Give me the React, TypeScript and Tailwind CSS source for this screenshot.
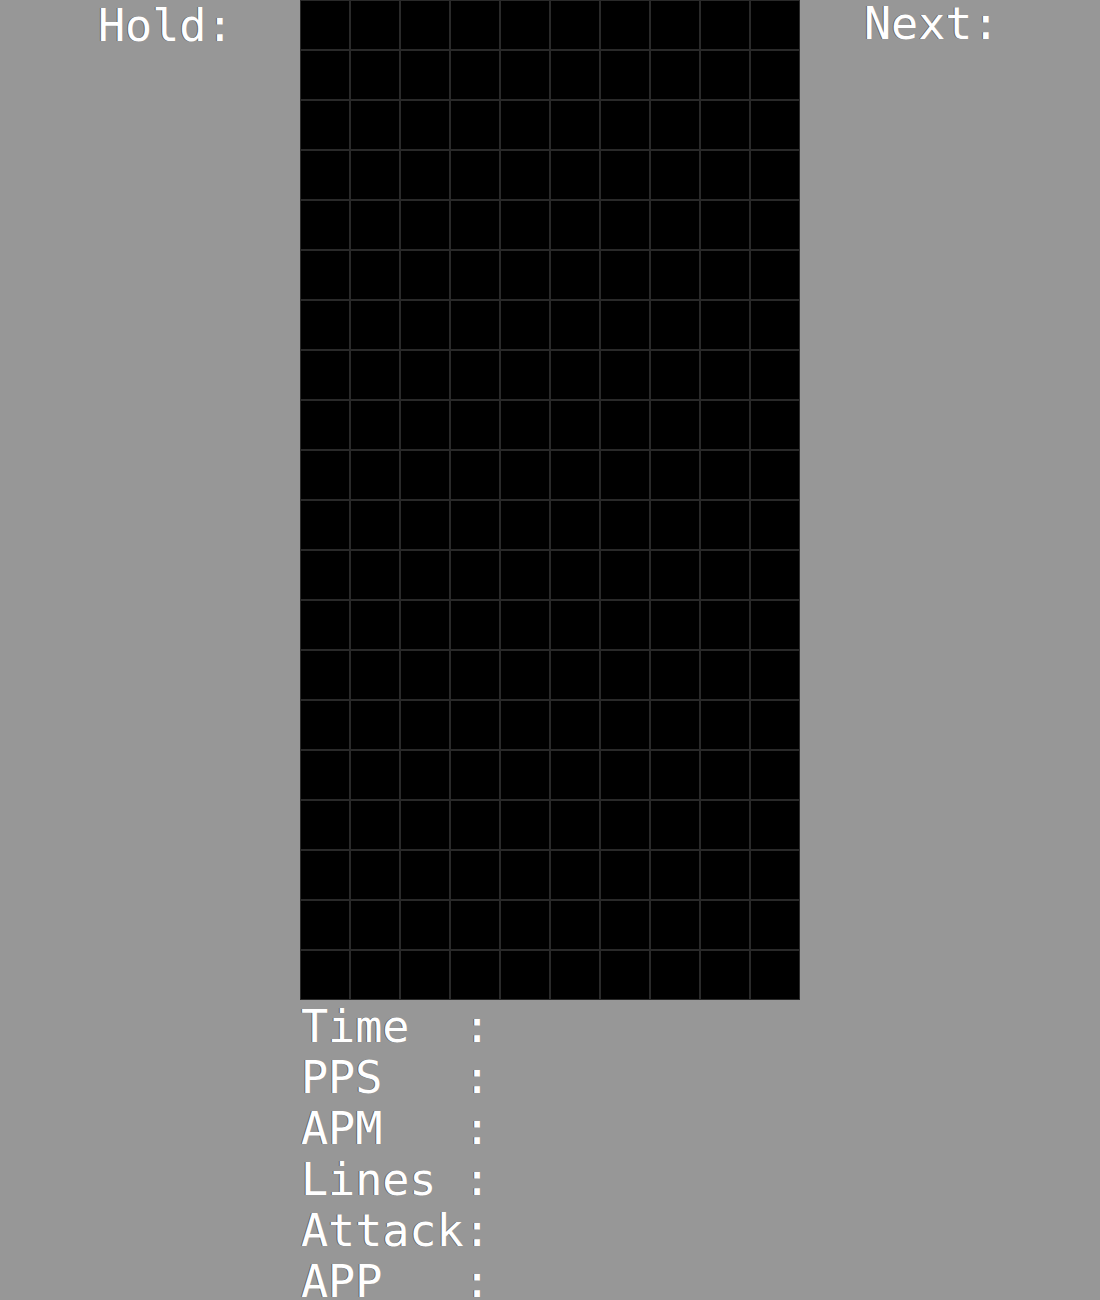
const ROWS = 20;
const COLUMNS = 10;
const STATS = ["Time", "PPS", "APM", "Lines", "Attack", "APP"];

function Board() {
  return (
    <div role="grid" aria-label="Playfield" className="grid grid-cols-10 bg-black">
      {Array.from({ length: ROWS * COLUMNS }, (_, i) => (
        <div key={i} className="aspect-square border border-[#292929]" />
      ))}
    </div>
  );
}

function Stats() {
  return (
    <dl className="pt-px pl-px">
      {STATS.map((label) => (
        <div key={label} className="flex">
          <dt className="whitespace-pre">{label.padEnd(6, " ") + ":"}</dt>
          <dd />
        </div>
      ))}
    </dl>
  );
}

export default function App() {
  return (
    <main className="grid h-screen grid-cols-[1fr_500px_1fr] overflow-hidden bg-[#979797] font-['DejaVu_Sans_Mono',monospace] text-[45px] leading-[51px] text-white [text-shadow:-1px_0_0_rgb(0_0_0/0.4)]">
      <section className="pl-[98px]">
        <h2>Hold:</h2>
      </section>
      <section>
        <Board />
        <Stats />
      </section>
      <section className="pl-16">
        <h2 className="leading-12">Next:</h2>
      </section>
    </main>
  );
}
